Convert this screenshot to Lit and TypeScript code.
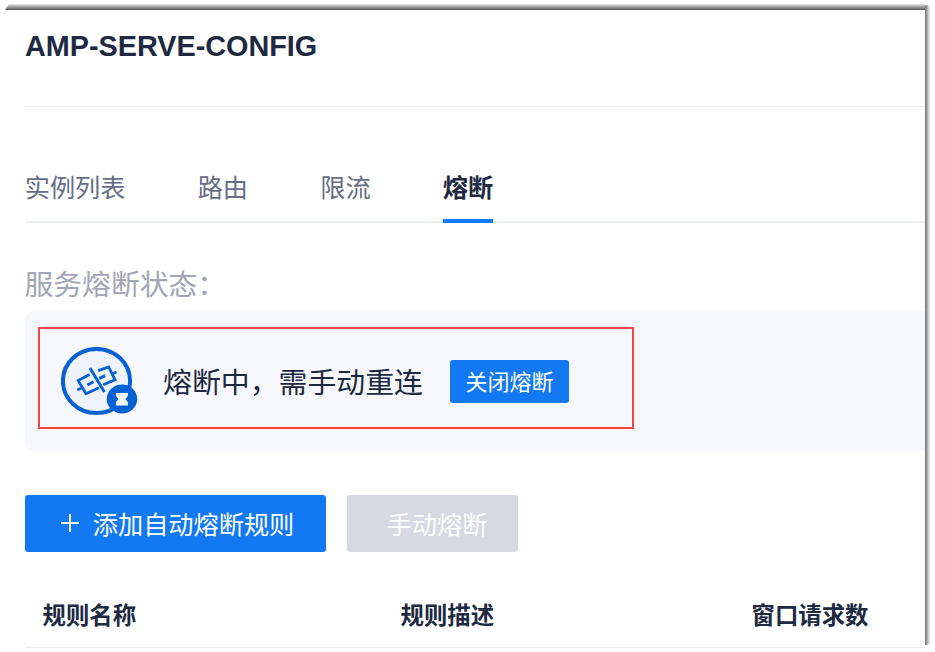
import { LitElement, html, css } from "lit";
import { customElement, state } from "lit/decorators.js";
import { classMap } from "lit/directives/class-map.js";

@customElement("breaker-icon")
class BreakerIcon extends LitElement {
  static styles = css`
    :host { display: block; width: 77px; height: 69px; }
    svg { display: block; }
  `;
  render() {
    return html`
      <svg width="77" height="69" viewBox="0 0 77 69" fill="none" stroke="#0661d2">
        <ellipse cx="35.5" cy="34" rx="33.6" ry="32.1" fill="#eff3fc" stroke-width="4" />
        <g stroke-width="2.8">
          <path d="M28.6 27.6 17.2 33.6 25 46.8 38 40.8M16.3 43l4.9-2.2" />
          <path d="M37.2 23.6 47.7 20 54 32.8 42.2 37.8M50.6 27.2l4.8-2.3" />
          <path d="M29 21 43.4 45M26.4 38l6.2-3.2M38.2 31.4l6-2.8" stroke-width="2.9" />
        </g>
        <ellipse cx="61" cy="51.9" rx="15.2" ry="14.5" fill="#0661d2" stroke="none" />
        <path
          d="M54.9 46h12v3.1l-2.5 3 2.5 3.1v3.3h-12v-3.3l2.5-3.1-2.5-3z"
          fill="#f3f7fe"
          stroke="none"
        />
      </svg>
    `;
  }
}

@customElement("app-root")
class AppRoot extends LitElement {
  static styles = css`
    :host {
      display: block;
      width: 935px;
      height: 652px;
      overflow: hidden;
      background: #fff;
      color: #202942;
      font-family: "Liberation Sans", "Noto Sans CJK SC", sans-serif;
    }
    * { box-sizing: border-box; }
    .frame {
      display: grid;
      grid-template-columns: 925px 5px;
      grid-template-rows: 6px 638px;
      padding-top: 4px;
      white-space: nowrap;
    }
    .shade-top {
      grid-column: 1 / 3;
      margin-left: 5px;
      background: linear-gradient(#dedede 0 1px, #c4c4c4 1px 2px, #a8a8a8 2px 3px, #919191 3px 4px, #7d7d7d 4px 5px, #5e5e5e 5px 6px);
      clip-path: polygon(4px 0, 920px 0, 920px 6px, 0 6px);
    }
    .shade-right {
      height: 640px;
      margin-top: -5px;
      border-radius: 0 4px 4px 0;
      background: linear-gradient(90deg, #808080 0 1px, #969696 1px 2px, #b0b0b0 2px 3px, #cbcbcb 3px 4px, #e3e3e3 4px 5px);
    }
    .page { padding-left: 25px; }
    .title {
      margin: 0;
      height: 97px;
      padding-top: 20px;
      border-bottom: 1px solid #ebecee;
      font-size: 28.8px;
      line-height: 33px;
      font-weight: 700;
    }
    .tabs {
      display: flex;
      gap: 72.2px;
      height: 116px;
      padding-top: 63px;
      margin-left: -0.3px;
      border-bottom: 2px solid #ebeef2;
    }
    .tab {
      height: 53px;
      font-size: 25.2px;
      line-height: 36px;
      color: #666d85;
    }
    .tab.active {
      color: #202942;
      font-weight: 700;
      border-bottom: 4px solid #0d7aff;
    }
    .label {
      height: 88px;
      padding-top: 42px;
      margin-left: -0.5px;
      font-size: 28.8px;
      line-height: 40px;
      color: #a2a6b3;
    }
    .status {
      height: 140px;
      padding: 16px 0 0 13px;
      border-radius: 9px 0 0 9px;
      background: #f7f8fc;
    }
    .notice {
      display: flex;
      align-items: center;
      width: 596px;
      height: 102px;
      padding-left: 21px;
      border: 2px solid #f74345;
    }
    breaker-icon { margin-top: 7px; }
    .message { margin: 9px 0 0 25px; width: 287px; font-size: 28.9px; line-height: 40px; }
    .btn {
      display: flex;
      align-items: center;
      justify-content: center;
      padding: 0;
      border: 0;
      border-radius: 3px;
      background: #1279f2;
      color: #fff;
      font: inherit;
      font-size: 25.2px;
      line-height: 36px;
    }
    .close { width: 119px; height: 43px; margin-top: 6px; padding-top: 3px; font-size: 22px; line-height: 32px; }
    .actions { display: flex; gap: 21px; padding-top: 44px; }
    .add { width: 301px; height: 57px; gap: 14px; padding: 3px 0 0 4px; }
    .plus { display: block; margin-top: -5px; }
    .manual { width: 171px; height: 57px; padding: 3px 0 0 9px; background: #d6d9e1; }
    .thead {
      display: grid;
      grid-template-columns: 358px 351px 1fr;
      height: 96px;
      padding: 47px 0 0 17.5px;
      border-bottom: 1px solid #ebecee;
      font-size: 23.4px;
      line-height: 34px;
      font-weight: 700;
    }
  `;

  @state() private active = 3;
  private tabs = ["实例列表", "路由", "限流", "熔断"];
  private columns = ["规则名称", "规则描述", "窗口请求数"];

  render() {
    return html`
      <div class="frame">
        <div class="shade-top"></div>
        <main class="page">
          <h1 class="title">AMP-SERVE-CONFIG</h1>
          <nav class="tabs">
            ${this.tabs.map(
              (name, i) => html`<div
                class=${classMap({ tab: true, active: i === this.active })}
                @click=${() => (this.active = i)}
              >${name}</div>`
            )}
          </nav>
          <div class="label">服务熔断状态：</div>
          <section class="status">
            <div class="notice">
              <breaker-icon></breaker-icon>
              <div class="message">熔断中，需手动重连</div>
              <button class="btn close">关闭熔断</button>
            </div>
          </section>
          <div class="actions">
            <button class="btn add">
              <svg class="plus" width="18" height="18" viewBox="0 0 18 18" stroke="#fff" stroke-width="2">
                <path d="M0 9h18M9 0v18" />
              </svg>
              <span>添加自动熔断规则</span>
            </button>
            <button class="btn manual" disabled>手动熔断</button>
          </div>
          <div class="thead">${this.columns.map((c) => html`<div>${c}</div>`)}</div>
        </main>
        <div class="shade-right"></div>
      </div>
    `;
  }
}
